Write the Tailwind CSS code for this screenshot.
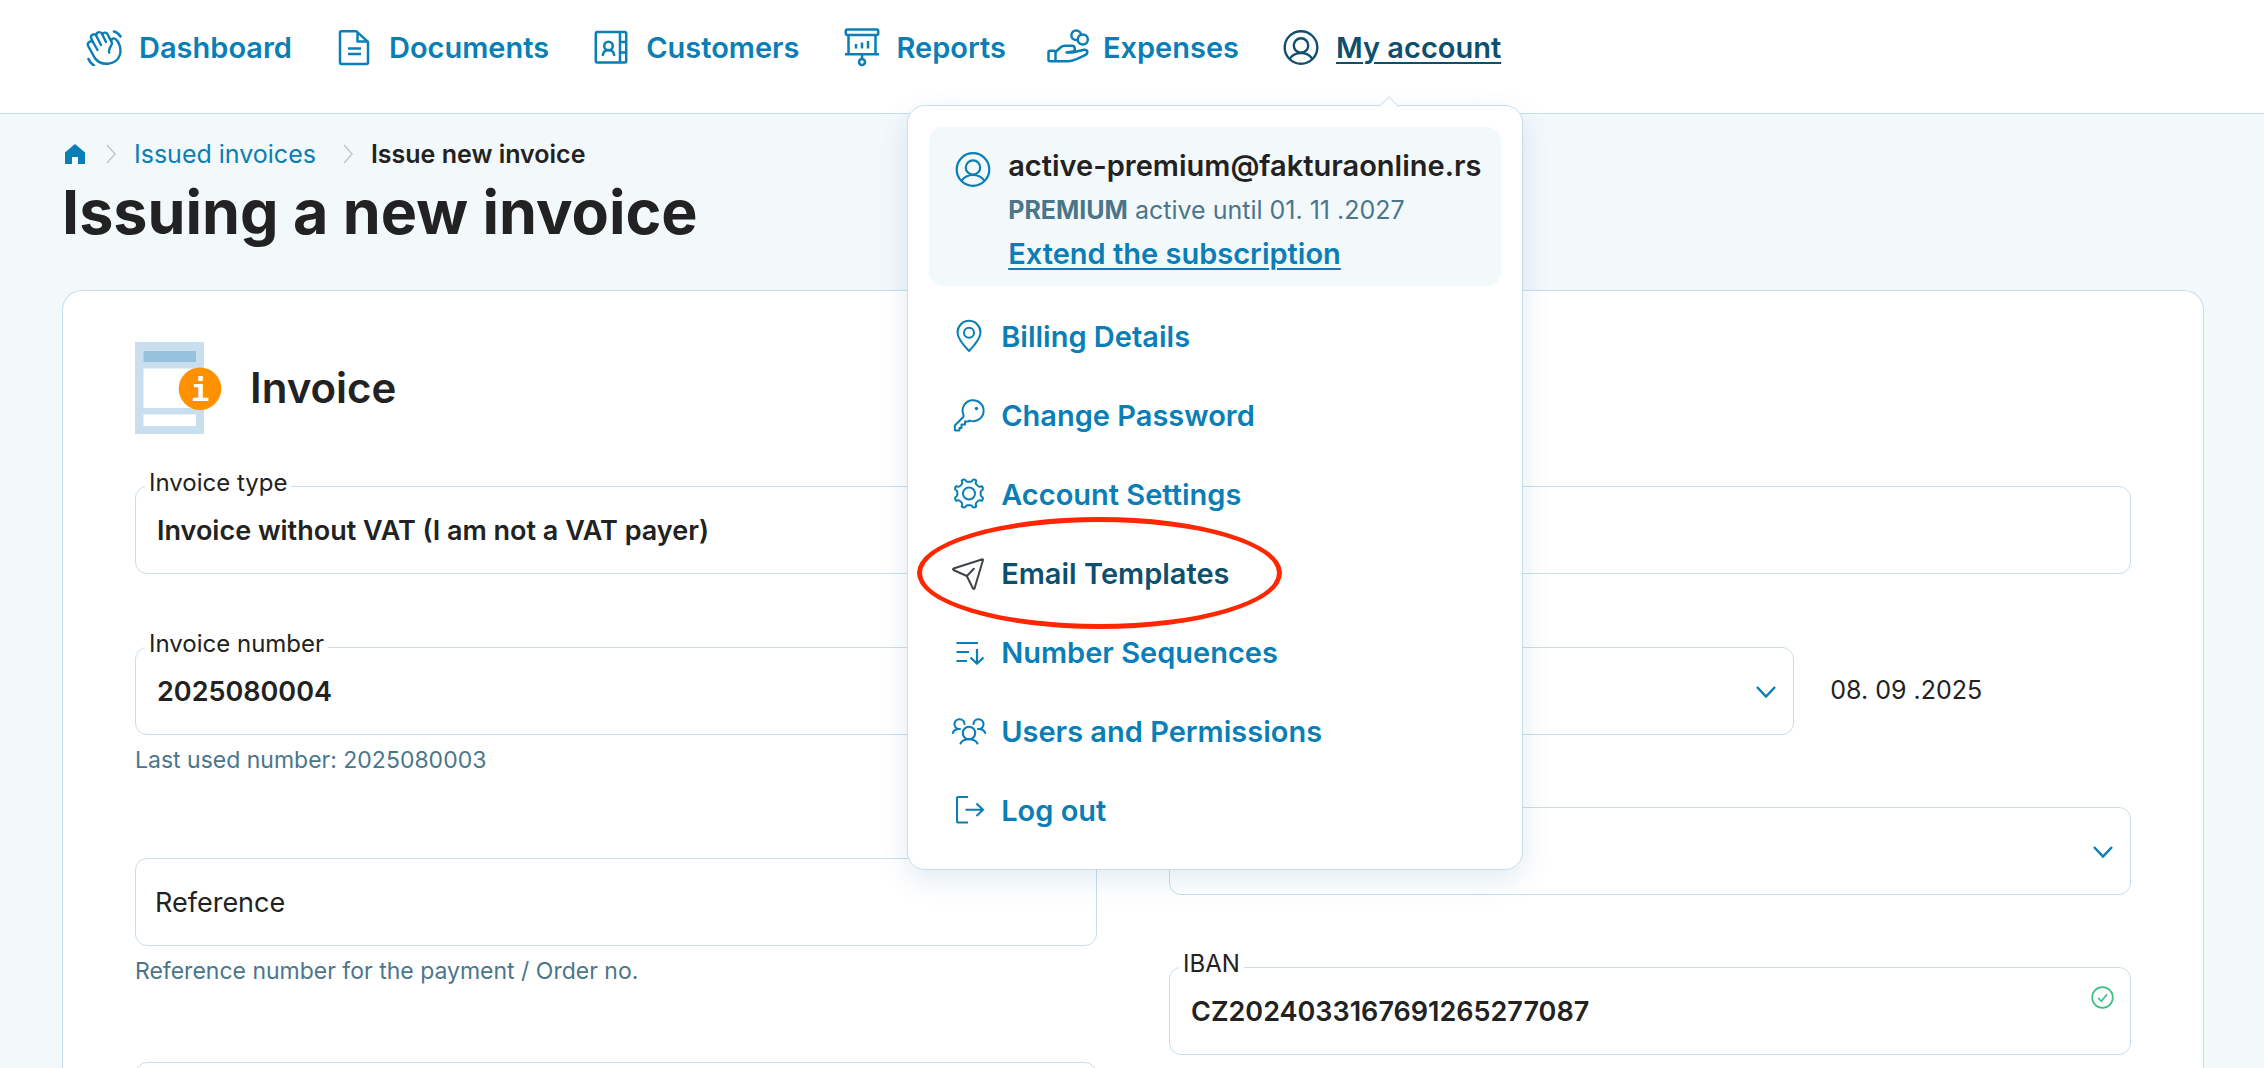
<!DOCTYPE html>
<html lang="en">
<head>
<meta charset="utf-8">
<meta name="viewport" content="width=device-width, initial-scale=1">
<title>Issuing a new invoice</title>
<script src="https://cdn.jsdelivr.net/npm/@tailwindcss/browser@4"></script>
</head>
<body class="min-h-screen overflow-x-hidden bg-[#f3f8fb] font-['Inter',sans-serif] text-[#222222]">

<header class="border-b border-[#c8deec] bg-white">
  <nav aria-label="Main" class="flex h-[113px] gap-11 pt-[30px] pl-[86px] text-[29px] leading-9 font-semibold text-[#0a7eb5]">
    <a href="#" class="flex h-9 items-center gap-[17px]">
      <svg class="size-9 shrink-0" viewBox="0 0 36 36" fill="none" stroke="currentColor" stroke-width="2.4" stroke-linecap="round" stroke-linejoin="round"><path d="M11.5 20 7.5 13C5.5 9.5 0.5 12 2.2 16L8.5 27.5C14 36.5 30.5 36 34 24.5 35.5 18.5 33 11.5 29.5 9 26.5 7.2 24.3 9.8 25.8 12.5 27 16 22 16.5 23.2 22.5M7.5 13 5.3 8.5C3.8 4.5 8.8 2.8 10.5 6.2L15 15M10.500 6.2C9.5 2 14.5 0.7 16.200 4.2L20 12M16.2 4.5C18 1.5 21 2.5 22 5L25.500 12"/><path d="M28 1.500Q32 2.500 34.500 6.500M2.500 29Q4 33 8 35.500" stroke-width="2.600"/></svg>
      <span>Dashboard</span>
    </a>
    <a href="#" class="flex h-9 items-center gap-[17px]">
      <svg class="size-9 shrink-0" viewBox="0 0 36 36" fill="none" stroke="currentColor" stroke-width="2.500" stroke-linejoin="round"><path d="M5.500 1.300H20.500L32 11.800V32.500Q32 34 30.500 34H5.500Q4 34 4 32.500V2.800Q4 1.300 5.500 1.300ZM21.500 2V11.500H31.500M12 18.500H25M12 24H25"/></svg>
      <span>Documents</span>
    </a>
    <a href="#" class="flex h-9 items-center gap-[17px]">
      <svg class="size-9 shrink-0" viewBox="0 0 36 36" fill="none" stroke="currentColor" stroke-width="2.500" stroke-linejoin="round"><rect x="2.800" y="2" width="30.400" height="30.400" rx="1.500"/><path d="M27 2V32.400M27 12H33M27 22.500H33"/><circle cx="15.500" cy="16" r="4.300"/><path d="M9.800 25C10.500 21 12.500 20 15.500 20S20.500 21 21.200 25" stroke-linecap="round"/></svg>
      <span>Customers</span>
    </a>
    <a href="#" class="flex h-9 items-center gap-[17px]">
      <svg class="size-9 shrink-0 overflow-visible" viewBox="0 0 36 36" fill="none" stroke="currentColor" stroke-width="2.500" stroke-linejoin="round"><rect x="1.800" y="-.5" width="32.400" height="5.500" rx="1.500"/><path d="M4.500 5V24M31.500 5V24M1 24.200H35M18 24.200V28.500M12 14V18.500M18 12.500V18.500M24 11V18.500"/><circle cx="18" cy="32" r="3"/></svg>
      <span>Reports</span>
    </a>
    <a href="#" class="flex h-9 items-center gap-[17px]">
      <svg class="size-9 shrink-0 overflow-visible" viewBox="0 0 36 36" fill="none" stroke="currentColor" stroke-width="2.500" stroke-linejoin="round" stroke-linecap="round"><rect x="-1.500" y="20.800" width="7" height="10.400" rx="1.500"/><path d="M5.500 22 10.500 17.500Q12.500 15.800 15 15.800H22C25 15.800 26 20.500 23 21.500L16.500 22.500H22.500L34 19.800C38 19 38.500 23.500 35 25.200 29 28.300 22.500 31.200 19 31.200H5.500"/><circle cx="26.200" cy="5.300" r="4.800"/><circle cx="32.800" cy="9.500" r="5" fill="white"/></svg>
      <span>Expenses</span>
    </a>

    <div class="relative z-10">
      <a href="#" aria-haspopup="true" class="flex h-9 items-center gap-[17px] text-[#0f4f6e]">
        <svg class="size-9 shrink-0" viewBox="0 0 36 36" fill="none" stroke="currentColor" stroke-width="2.400"><circle cx="18" cy="17.500" r="16.300"/><circle cx="18" cy="15.500" r="7.200"/><path d="M6.500 29Q10.500 23 18 23T29.500 29"/></svg>
        <span class="underline decoration-2 underline-offset-4">My account</span>
      </a>

      <!-- Account menu -->
      <div class="absolute top-[75px] -right-[22px] w-[616px] rounded-[18px] border border-[#c8deec] bg-white px-[21px] pt-[21px] pb-[19px] shadow-[0_10px_30px_rgba(10,90,150,0.12)]">
        <svg class="absolute -top-[10px] right-[123px] h-[11px] w-5" viewBox="0 0 20 11"><path d="M0 11 10 1 20 11Z" fill="white"/><path d="M0 11 10 1 20 11" fill="none" stroke="#dcebf5" stroke-width="1.500"/></svg>
        <div class="flex gap-[17px] rounded-[14px] bg-[#f3f8fb] pt-[17px] pb-2.5 pl-[26px]">
          <svg class="mt-2 size-9 shrink-0" viewBox="0 0 36 36" fill="none" stroke="currentColor" stroke-width="2.200"><circle cx="18" cy="17.500" r="16.300"/><circle cx="18" cy="15.500" r="7.200"/><path d="M6.500 29Q10.500 23 18 23T29.500 29"/></svg>
          <div class="leading-[44px] whitespace-nowrap">
            <div class="text-[#222222]">active-premium@fakturaonline.rs</div>
            <div class="text-[25px] font-normal text-[#4b768a]"><strong class="font-bold">PREMIUM</strong> active until 01. 11 .2027</div>
            <a href="#" class="block underline decoration-2 underline-offset-4">Extend the subscription</a>
          </div>
        </div>
        <ul class="mt-[11px] pl-[22px]">
          <li><a href="#" class="flex h-[79px] items-center gap-3.5">
            <svg class="size-9" viewBox="0 0 36 36" fill="none" stroke="currentColor" stroke-width="2" stroke-linejoin="round"><path d="M18 32Q6.500 20 6.500 13.500A11.500 11.700 0 0 1 29.500 13.500Q29.500 20 18 32Z"/><circle cx="18" cy="13.700" r="5"/></svg>
            Billing Details</a></li>
          <li><a href="#" class="flex h-[79px] items-center gap-3.5">
            <svg class="size-9" viewBox="0 0 36 36" fill="none" stroke="currentColor" stroke-width="2" stroke-linejoin="round"><path d="M12.300 16.500A10.500 10.500 0 1 1 18.500 22.600L17.500 23.500H14V26.500H10.500V30H8.500V32Q8.500 32.500 8 32.500H4.500Q3.800 32.500 3.800 31.500V27.500L12.300 19Q13 18 12.300 16.500Z"/><circle cx="25.500" cy="10.500" r="1.700" fill="currentColor" stroke="none"/></svg>
            Change Password</a></li>
          <li><a href="#" class="flex h-[79px] items-center gap-3.5">
            <svg class="size-9" viewBox="0 0 36 36" fill="none" stroke="currentColor" stroke-width="2" stroke-linejoin="round"><path transform="translate(18 16.500)" d="M11.700 1.600 Q12 3.200 13.500 3.600 Q14.600 5.200 12.900 7.300 Q11 6.300 9.400 7.100L7.100 9.400Q6.300 11 7.300 12.900 Q5.200 14.600 3.600 13.500 Q3.200 12 1.600 11.700L-1.600 11.700Q-3.200 12 -3.600 13.500 Q-5.200 14.600 -7.300 12.900 Q-6.300 11 -7.100 9.400L-9.400 7.100Q-11 6.300 -12.900 7.300 Q-14.600 5.200 -13.500 3.600 Q-12 3.200 -11.700 1.600L-11.700 -1.600Q-12 -3.200 -13.500 -3.600 Q-14.600 -5.200 -12.900 -7.300 Q-11 -6.300 -9.400 -7.100L-7.100 -9.400Q-6.300 -11 -7.300 -12.900 Q-5.200 -14.600 -3.600 -13.500 Q-3.200 -12 -1.600 -11.700L1.600 -11.700Q3.200 -12 3.600 -13.500 Q5.200 -14.600 7.300 -12.900 Q6.300 -11 7.100 -9.400L9.400 -7.100Q11 -6.300 12.900 -7.300 Q14.600 -5.200 13.500 -3.600 Q12 -3.200 11.700 -1.600Z"/><circle cx="18" cy="16.500" r="6"/></svg>
            Account Settings</a></li>
          <li class="relative"><a href="#" aria-current="true" class="flex h-[79px] items-center gap-3.5 text-[#0f4f6e]">
            <svg class="size-9" viewBox="0 0 36 36" fill="none" stroke="#3c4448" stroke-width="2" stroke-linejoin="round" stroke-linecap="round"><path d="M31.500 3.300 2.500 12.500Q1.500 13.300 2.500 14L15.800 20 22 32.500Q22.800 33.500 23.500 32.500L32 4Q32 3.300 31.500 3.300ZM15.800 20 22.800 12.800"/></svg>
            Email Templates</a>
            <span aria-hidden="true" class="pointer-events-none absolute -top-[17px] -left-[34px] h-[112px] w-[365px] rounded-[50%] border-[5px] border-[#ff2600]"></span></li>
          <li><a href="#" class="flex h-[79px] items-center gap-3.5">
            <svg class="size-9" viewBox="0 0 36 36" fill="none" stroke="currentColor" stroke-width="2.200" stroke-linejoin="round"><path d="M5.500 8H27M5.500 17H18M5.500 26H16M26 14V28.500M19.500 22.500 26 28.700 32.500 22.500"/></svg>
            Number Sequences</a></li>
          <li><a href="#" class="flex h-[79px] items-center gap-3.5">
            <svg class="size-9" viewBox="0 0 36 36" fill="none" stroke="currentColor" stroke-width="2.100" stroke-linecap="round"><circle cx="18" cy="19" r="6.200"/><path d="M9.500 29.500Q11.500 25.200 18 25.200T26.500 29.500M13.500 10A5 5 0 1 0 7 15M7 15Q3 15.500 1.800 19M22.500 10A5 5 0 1 1 29 15M29 15Q33 15.500 34.200 19M7 15H9M29 15H27"/></svg>
            Users and Permissions</a></li>
          <li><a href="#" class="flex h-[79px] items-center gap-3.5">
            <svg class="size-9" viewBox="0 0 36 36" fill="none" stroke="currentColor" stroke-width="2.100"><path d="M17 4H7Q6 4 6 5V28.500Q6 29.500 7 29.500H17M14.500 16.700H32M25.500 10.500 32 16.700 25.500 23"/></svg>
            Log out</a></li>
        </ul>
      </div>
    </div>
  </nav>
</header>

<main class="pt-[22px] pr-[60px] pl-[62px]">
  <nav aria-label="Breadcrumb" class="flex h-9 items-center text-[25px] leading-9">
    <a href="#" aria-label="Home" class="ml-[3px] text-[#0a7eb5]"><svg class="size-5" viewBox="0 0 20 20" fill="currentColor"><path d="M10 0 20 8.500V20H13V13H7V20H0V8.500Z"/></svg></a>
    <svg class="mr-[18px] ml-[21px] h-5 w-2.5" viewBox="0 0 10 20" fill="none" stroke="#c2c7ca" stroke-width="1.500"><path d="M1 1 9 10 1 19"/></svg>
    <a href="#" class="text-[#0a7eb5]">Issued invoices</a>
    <svg class="mr-[18px] ml-[27px] h-5 w-2.5" viewBox="0 0 10 20" fill="none" stroke="#c2c7ca" stroke-width="1.500"><path d="M1 1 9 10 1 19"/></svg>
    <span class="font-semibold">Issue new invoice</span>
  </nav>
  <h1 class="mt-1 text-[61px] leading-[72px] font-bold">Issuing a new invoice</h1>

  <section class="mt-[42px] rounded-t-[20px] border border-b-0 border-[#c8deec] bg-white px-[72px] pt-[51px]">
    <div class="flex items-center gap-7">
      <svg class="h-[92px] w-[87px]" viewBox="0 0 87 92"><path fill="#c9dfed" d="M0 0H69V92H0Z"/><path fill="#97c2de" d="M8.500 9H61V20H8.500Z"/><path fill="white" d="M8.500 26.500H61V66H8.500ZM8.500 72.500H61V84H8.500Z"/><circle cx="65" cy="46.700" r="21.300" fill="#ff9100"/><text x="65" y="58.500" text-anchor="middle" font-family="DejaVu Sans Mono" font-weight="bold" font-size="31" fill="white">i</text></svg>
      <h2 class="text-[42px] leading-[50px] font-semibold">Invoice</h2>
    </div>

    <form class="mt-[52px] text-[27px]">
      <div class="relative h-[88px] rounded-xl border border-[#c8deec]">
        <label for="type" class="absolute -top-[19px] left-[9px] bg-white px-1 text-2xl leading-[30px]">Invoice type</label>
        <input id="type" type="text" value="Invoice without VAT (I am not a VAT payer)" class="h-full w-full rounded-xl px-[21px] font-semibold">
      </div>

      <div class="mt-[73px] grid grid-cols-2 gap-x-[72px]">
        <div class="flex flex-col gap-[73px]">
          <div class="mb-2.5">
            <div class="relative h-[88px] rounded-xl border border-[#c8deec]">
              <label for="number" class="absolute -top-[19px] left-[9px] bg-white px-1 text-2xl leading-[30px]">Invoice number</label>
              <input id="number" type="text" value="2025080004" class="h-full w-full rounded-xl px-[21px] font-semibold">
            </div>
            <p class="mt-2.5 text-[23px] leading-[30px] text-[#4b768a]">Last used number: 2025080003</p>
          </div>
          <div class="mb-[3px]">
            <input type="text" aria-label="Reference" placeholder="Reference" class="block h-[88px] w-full rounded-xl border border-[#c8deec] px-[19px] placeholder:text-[#222222]">
            <p class="mt-2.5 text-[23px] leading-[30px] text-[#4b768a]">Reference number for the payment / Order no.</p>
          </div>
          <input type="text" aria-label="Order note" class="block h-[88px] w-full rounded-xl border border-[#c8deec] px-[19px]">
        </div>

        <div class="flex flex-col gap-[72px]">
          <div class="grid grid-cols-[65fr_35fr] items-center">
            <div class="relative">
              <select aria-label="Due date" class="block h-[88px] w-full appearance-none rounded-xl border border-[#c8deec] bg-white px-[21px] font-semibold"><option></option></select>
              <svg class="pointer-events-none absolute top-[39px] right-[18px] h-3 w-5" viewBox="0 0 20 12" fill="none" stroke="#0a7eb5" stroke-width="2.500"><path d="M1 1 10 10.500 19 1"/></svg>
            </div>
            <span class="pl-9 text-[25px]">08. 09 .2025</span>
          </div>
          <div class="relative">
            <select aria-label="Bank account" class="block h-[88px] w-full appearance-none rounded-xl border border-[#c8deec] bg-white px-[21px] font-semibold"><option></option></select>
            <svg class="pointer-events-none absolute top-[39px] right-[18px] h-3 w-5" viewBox="0 0 20 12" fill="none" stroke="#0a7eb5" stroke-width="2.500"><path d="M1 1 10 10.500 19 1"/></svg>
          </div>
          <div class="relative h-[88px] rounded-xl border border-[#c8deec]">
            <label for="iban" class="absolute -top-[19px] left-[9px] bg-white px-1 text-2xl leading-[30px]">IBAN</label>
            <input id="iban" type="text" value="CZ2024033167691265277087" class="h-full w-full rounded-xl px-[21px] font-semibold">
            <svg class="absolute top-[18px] right-4 size-[23px]" viewBox="0 0 23 23" fill="none" stroke="#3cbf83" stroke-width="1.700"><circle cx="11.500" cy="11.500" r="10.300"/><path d="M7 12 10.300 15.200 16 8.300"/></svg>
          </div>
        </div>
      </div>
    </form>
  </section>
</main>
</body>
</html>
